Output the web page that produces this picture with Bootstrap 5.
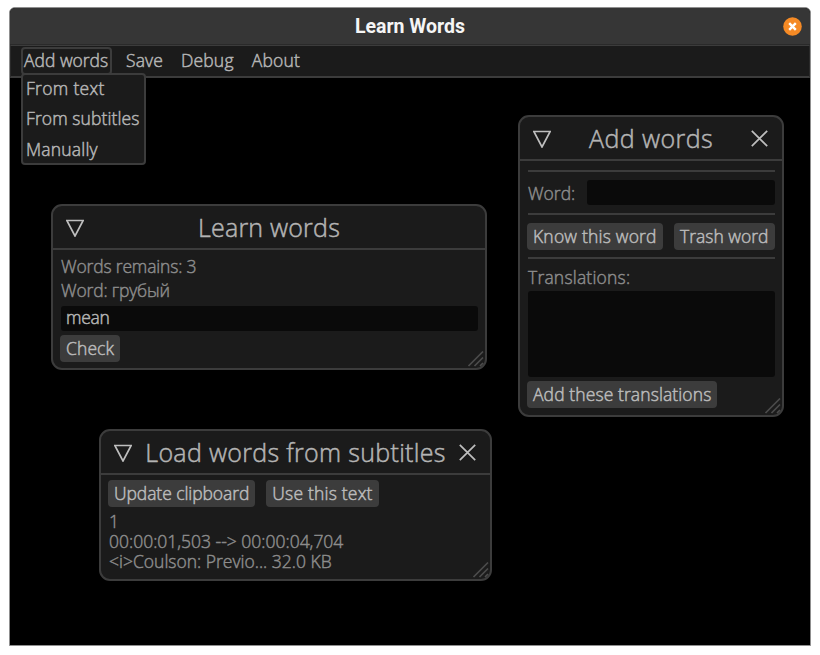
<!DOCTYPE html>
<html lang="en">
<head>
<meta charset="utf-8">
<meta name="viewport" content="width=device-width, initial-scale=1">
<title>Learn Words</title>
<link href="https://cdn.jsdelivr.net/npm/bootstrap@5.3.0/dist/css/bootstrap.min.css" rel="stylesheet">
<style>
:root{--line:#3c3c3c;--panel:#1b1b1b;--field:#0a0a0a;--dim:#8c8c8c;--ink:#b4b4b4}
body{width:820px;height:655px;overflow:hidden;background:#fff;font-family:"Open Sans","Noto Sans",sans-serif;font-weight:300;font-size:17.5px;line-height:24px;color:var(--ink);padding:7px 9px 9px;-webkit-text-stroke:.5px}
.app-frame{height:639px;background:#000;border:1px solid #8f8f8f;border-radius:6px 6px 0 0}
.title-bar{height:37px;background:#363636;border-bottom:1px solid #2a2a2a;border-radius:5px 5px 0 0}
.title-bar h1{font:700 19.5px/24px Roboto,sans-serif;color:#f5f5f5;-webkit-text-stroke:0;padding-top:2px}
.close-app{right:8.5px;top:8.5px;width:19px;height:19px}
.menu-bar{height:33px;background:var(--panel);border:solid var(--line);border-width:1px 1px 2px;border-left-color:#2a2a2a;border-right-color:#2a2a2a;padding:1px 0 0 10px;gap:10px}
.menu-item{height:28px;line-height:22px;border:2px solid transparent;padding:0 2px;white-space:pre;color:var(--ink);text-decoration:none}
.menu-item.is-open{border-color:var(--line);border-radius:4px;padding:0 1px;width:91px}
.drop{left:11px;top:65px;width:125px;height:92px;background:var(--panel);border:2px solid var(--line);border-radius:4px;padding:0 0 0 3px}
.drop a{flex:0 0 30.4px;line-height:26px;white-space:pre;color:var(--ink);text-decoration:none}
.win{background:var(--panel);border:2px solid var(--line);border-radius:11px}
.win-head{height:44px;border-bottom:2px solid var(--line);padding:1px 14px 0 13px}
.win-title{font-size:25px;line-height:41px;font-weight:300;white-space:pre;-webkit-text-stroke-width:.5px}
.win svg{fill:none;stroke:#bebebe;stroke-width:1.7}
.win .grip{stroke:#4c4c4c;right:0;bottom:0}
.win-body{padding:0 7.5px 0 7px}
.w-learn{left:41px;top:196px;width:436px;height:166px}
.w-learn .win-title{padding-right:17px}
.w-add{left:508px;top:107px;width:266px;height:302px}
.w-load{left:89px;top:421px;width:393px;height:152px}
.w-learn .win-body{padding-top:3.5px}
.w-add .win-body{padding-top:9px}
.w-load .win-body{padding-top:5px}
.dim{color:var(--dim);white-space:pre;-webkit-text-stroke-width:.45px;padding-left:1px}
.field{background:var(--field);border-radius:3px;margin-left:1px}
.field-line{height:25px}
.field-word{flex:0 0 188px}
.field-area{height:86px;margin:2px 0 4px 1px}
.field-text{line-height:23px;padding-left:5px}
.key{background:var(--line);border:0;border-radius:4px;height:27px;line-height:26px;padding:0 6px 1px;white-space:pre;color:#bababa;font-weight:300;-webkit-text-stroke:.5px}
.key-gap{gap:11px}
.rule{height:2px;background:var(--line);margin-left:.5px}
.pad-keys{padding:7.5px 0 7px}
.label-area{margin-top:6px}
.lines{line-height:20px;padding-top:4px}
.t-m3{letter-spacing:-.3px}.t-m2{letter-spacing:-.17px}.t-m1{letter-spacing:-.08px}
.t-p1{letter-spacing:.1px}.t-p2{letter-spacing:.2px}.t-p3{letter-spacing:.31px}.t-p4{letter-spacing:.42px}
</style>
</head>
<body>
<main class="app-frame position-relative">
<header class="title-bar position-relative d-flex justify-content-center align-items-center">
<h1 class="m-0">Learn Words</h1>
<svg class="close-app position-absolute" viewBox="0 0 19 19"><circle cx="9.5" cy="9.5" r="9.3" fill="#f58a25"/><path d="M6.2 6.2l6.6 6.6M12.8 6.2l-6.6 6.6" stroke="#fff" stroke-width="2.4"/></svg>
</header>
<nav class="menu-bar d-flex">
<a class="menu-item is-open">Add words</a>
<a class="menu-item t-p1">Save</a>
<a class="menu-item t-p2">Debug</a>
<a class="menu-item t-p2">About</a>
</nav>

<section class="win w-learn position-absolute">
<div class="win-head d-flex align-items-center">
<svg width="18" height="18" viewBox="0 0 18 18"><path d="M.8 1.5h16.4L9 17z"/></svg>
<h2 class="win-title t-p2 m-0 flex-grow-1 text-center">Learn words</h2>
</div>
<div class="win-body">
<div class="dim t-m2">Words remains: 3</div>
<div class="dim t-m2">Word: грубый</div>
<div class="field field-line field-text mt-1 t-m3">mean</div>
<button class="key t-p1 d-block mt-1">Check</button>
</div>
<svg class="grip position-absolute" width="18" height="18" viewBox="0 0 18 18"><path d="M1.5 16L16 1.5M7.5 16L16 7.5M13 16l3-3"/></svg>
</section>

<section class="win w-add position-absolute">
<div class="win-head d-flex align-items-center">
<svg width="18" height="18" viewBox="0 0 18 18"><path d="M.8 1.5h16.4L9 17z"/></svg>
<h2 class="win-title t-p4 m-0 flex-grow-1 text-center">Add words</h2>
<svg width="17" height="17" viewBox="0 0 17 17"><path d="M.8.8l15.4 15.4M16.2.8L.8 16.2"/></svg>
</div>
<div class="win-body">
<div class="rule"></div>
<div class="d-flex align-items-center justify-content-between py-2">
<span class="dim">Word:</span><div class="field field-line field-word"></div>
</div>
<div class="rule"></div>
<div class="d-flex justify-content-between pad-keys">
<button class="key t-p2">Know this word</button><button class="key">Trash word</button>
</div>
<div class="rule"></div>
<div class="dim t-p2 label-area">Translations:</div>
<div class="field field-area"></div>
<button class="key t-p1 d-block">Add these translations</button>
</div>
<svg class="grip position-absolute" width="18" height="18" viewBox="0 0 18 18"><path d="M1.5 16L16 1.5M7.5 16L16 7.5M13 16l3-3"/></svg>
</section>

<section class="win w-load position-absolute">
<div class="win-head d-flex align-items-center">
<svg width="18" height="18" viewBox="0 0 18 18"><path d="M.8 1.5h16.4L9 17z"/></svg>
<h2 class="win-title t-p3 m-0 flex-grow-1 text-center">Load words from subtitles</h2>
<svg width="17" height="17" viewBox="0 0 17 17"><path d="M.8.8l15.4 15.4M16.2.8L.8 16.2"/></svg>
</div>
<div class="win-body">
<div class="d-flex key-gap">
<button class="key t-m1">Update clipboard</button><button class="key t-p2">Use this text</button>
</div>
<div class="lines dim">1
00:00:01,503 --&gt; 00:00:04,704
&lt;i&gt;Coulson: Previo... 32.0 KB</div>
</div>
<svg class="grip position-absolute" width="18" height="18" viewBox="0 0 18 18"><path d="M1.5 16L16 1.5M7.5 16L16 7.5M13 16l3-3"/></svg>
</section>

<div class="drop position-absolute d-flex flex-column">
<a class="t-p3">From text</a><a class="t-p1">From subtitles</a><a class="t-p2">Manually</a>
</div>
</main>
<script src="https://cdn.jsdelivr.net/npm/bootstrap@5.3.0/dist/js/bootstrap.bundle.min.js"></script>
</body>
</html>
